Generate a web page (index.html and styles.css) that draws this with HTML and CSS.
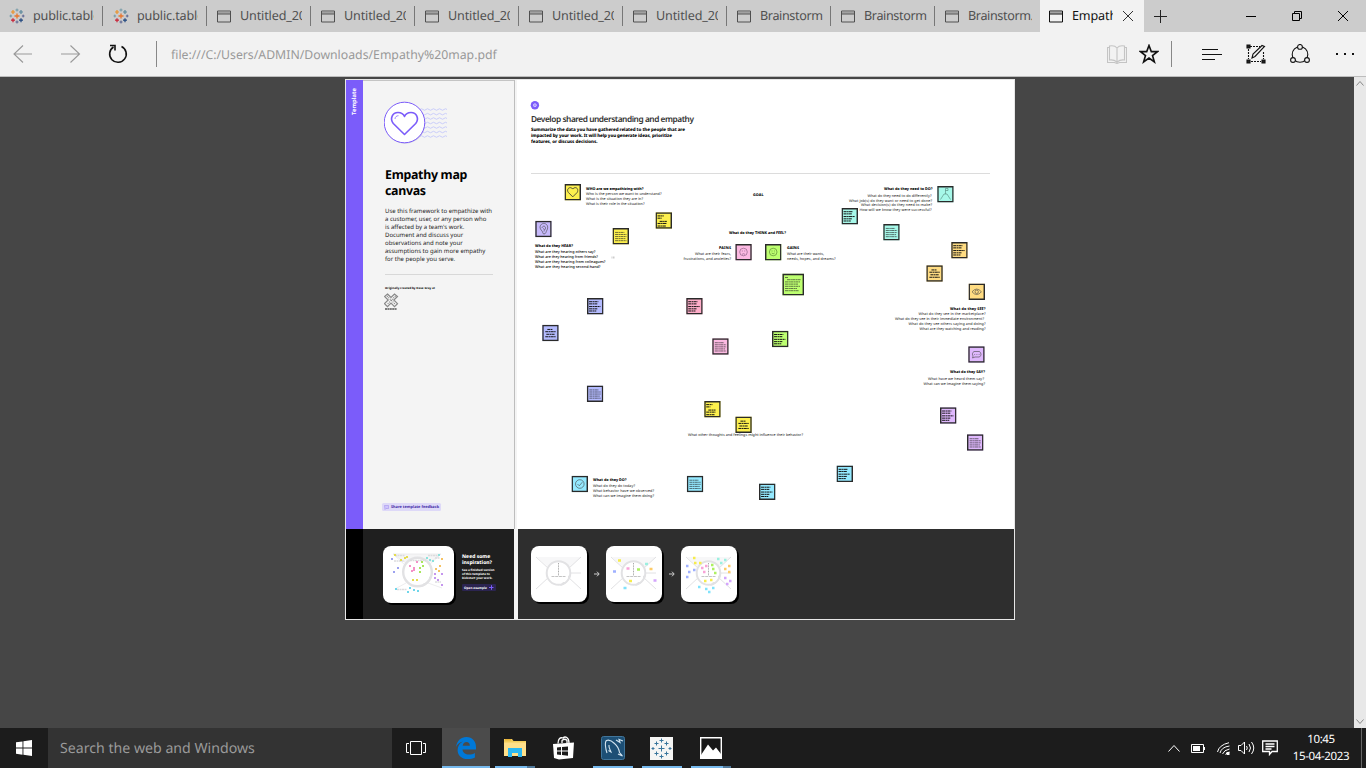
FILE: index.html
```html
<!DOCTYPE html>
<html lang="en">
<head>
<meta charset="utf-8">
<title>Empathy map.pdf</title>
<link rel="stylesheet" href="styles.css">
</head>
<body>
<svg class="defs" width="0" height="0">
  <defs>
    <symbol id="win" viewBox="0 0 14 13"><path d="M.5 1h13v11H.5zM.5 4h13" fill="none" stroke="currentColor"/><path d="M1 2h12v1.6H1z" fill="currentColor" opacity=".35"/></symbol>
    <symbol id="tableau" viewBox="-8 -8 16 16" fill="none">
      <path d="M-2.5 0h5M0-2.5v5" stroke="#e8762c" stroke-width="1.3"/>
      <path d="M-6-4h4M-4-6v4" stroke="#eb9129" stroke-width="1.2"/>
      <path d="M2-4h4M4-6v4" stroke="#59879b" stroke-width="1.2"/>
      <path d="M-6 4.2h4M-4 2.2v4" stroke="#c72035" stroke-width="1.2"/>
      <path d="M2 4.2h4M4 2.2v4" stroke="#1f457e" stroke-width="1.2"/>
      <path d="M-1.5-6h3M0-7.5v3M-7.5 0h2.6M-6.2-1.4v2.8" stroke="#7199a6"/>
      <path d="M-1.5 6h3M0 4.5v3M4.9 0h2.6M6.2-1.4v2.8" stroke="#5b6591"/>
    </symbol>
    <symbol id="heart" viewBox="0 0 28 26"><path d="M14 24 3.5 13.5C-1 8 2.5 1.5 8 1.500 11 1.500 13 3 14 5 15 3 17 1.500 20 1.500 25.500 1.500 29 8 24.500 13.500Z" fill="none" stroke="currentColor" stroke-width="2" stroke-linejoin="round"/></symbol>
    <symbol id="n1" viewBox="0 0 16 16"><path d="M0 0h16v16H0z" fill="currentColor"/><path class="ink" d="M2.500 4.300h9M2.500 6.300h11M2.500 8.300h11M2.500 10.300h10M2.500 12.300h11"/><path class="frame" d="M.7.7h14.600v14.600H.7z"/></symbol>
    <symbol id="n2" viewBox="0 0 16 16"><path d="M0 0h16v16H0z" fill="currentColor"/><path class="ink bold" d="M2 3.500h6M2 5.700h4M4 8.800h7M2 10.800h9M2 13.300h8"/><path class="frame" d="M.7.7h14.600v14.600H.7z"/></symbol>
    <symbol id="n3" viewBox="0 0 16 16"><path d="M0 0h16v16H0z" fill="currentColor"/><path class="ink bold" d="M5 4.500h5M3 6.700h10M4 9.200h8M3 11.600h10"/><path class="frame" d="M.7.7h14.600v14.600H.7z"/></symbol>
    <symbol id="n4" viewBox="0 0 16 16"><path d="M0 0h16v16H0z" fill="currentColor"/><path class="ink bold" d="M2 3.600h9M2 5.700h8M2 8.300h11M2 10.500h8M2 12.600h7"/><path class="frame" d="M.7.7h14.600v14.600H.7z"/></symbol>
    <symbol id="blank" viewBox="0 0 16 16"><path d="M0 0h16v16H0z" fill="currentColor"/><path class="frame" d="M.7.7h14.600v14.600H.7z"/></symbol>
    <symbol id="head" viewBox="0 0 56 56">
      <path d="M6 11h44L37 23H19z" fill="#f7f7f8"/>
      <path d="m5 11 13 12M50 11 37 23M5 43l13-12M50 43 37 31M40 27h10" stroke="#e2e2e4" fill="none"/>
      <circle cx="27.500" cy="27" r="11.800" fill="#fff" stroke="#e2e2e4" stroke-width="2"/>
      <path d="M35 17c4 3 5 8 4 12l-2 1v6h-5l-3 4c6-1 10-6 10.500-12C40 22 38 18 35 17z" fill="#e2e2e4"/>
      <path d="M27.500 17v13" stroke="#aaa" stroke-dasharray="1 .6"/><path d="M20.500 30.500h14" stroke="#c4c4c4" stroke-dasharray="3 .7"/>
    </symbol>
  </defs>
</svg>

<div class="screen">
  <header class="tabs">
    <div class="tab"><svg class="fav"><use href="#tableau"/></svg><span class="name">public.tableau</span></div>
    <div class="tab"><svg class="fav"><use href="#tableau"/></svg><span class="name">public.tableau</span></div>
    <div class="tab"><svg class="doc"><use href="#win"/></svg><span class="name">Untitled_2023</span></div>
    <div class="tab"><svg class="doc"><use href="#win"/></svg><span class="name">Untitled_2023</span></div>
    <div class="tab"><svg class="doc"><use href="#win"/></svg><span class="name">Untitled_2023</span></div>
    <div class="tab"><svg class="doc"><use href="#win"/></svg><span class="name">Untitled_2023</span></div>
    <div class="tab"><svg class="doc"><use href="#win"/></svg><span class="name">Untitled_2023</span></div>
    <div class="tab"><svg class="doc"><use href="#win"/></svg><span class="name tight">Brainstorm</span></div>
    <div class="tab"><svg class="doc"><use href="#win"/></svg><span class="name tight">Brainstorm</span></div>
    <div class="tab last"><svg class="doc"><use href="#win"/></svg><span class="name tight">Brainstorm.</span></div>
    <div class="tab active"><svg class="doc"><use href="#win"/></svg><span class="name">Empathy</span><svg class="close" viewBox="0 0 10 10"><path d="m0 0 10 10M10 0 0 10"/></svg></div>
    <svg class="plus" viewBox="0 0 13 13"><path d="M6.500 0v13M0 6.500h13"/></svg>
    <div class="winctl">
      <svg width="10" height="10"><path d="M0 5.500h10"/></svg>
      <svg width="10" height="10"><path d="M.5 2.500h7v7h-7zM2.500 2.500v-2h7v7h-2"/></svg>
      <svg width="10" height="10"><path d="m0 0 10 10M10 0 0 10"/></svg>
    </div>
  </header>

  <nav class="toolbar">
    <svg class="ico dim" width="20" height="18"><path d="M19 9H1M10 .5 1 9l9 8.500"/></svg>
    <svg class="ico dim" width="20" height="18"><path d="M0 9h18.500M9.500.5l9 8.500-9 8.500"/></svg>
    <svg class="ico refresh" width="20" height="20"><path d="M13.500 2.500A8.300 8.300 0 1 1 5.500 3M2 1.500h5v5" stroke-width="1.600"/></svg>
    <span class="bar"></span>
    <span class="url">file:///C:/Users/ADMIN/Downloads/Empathy%20map.pdf</span>
    <svg class="ico book" width="20" height="19"><path d="M2.500 2.500h-2v15h7l2.500 1 2.500-1h7v-15h-2M10 3v15M10 3C8 .5 5 .5 2.500 1v14c3-.5 5 0 7.500 2M10 3c2-2.500 5-2.500 7.500-2v14c-3-.5-5 0-7.500 2"/></svg>
    <svg class="ico" width="20" height="20"><path d="m10 1.500 2.300 6.100h6.200l-5 3.900 1.900 6.400-5.400-3.800-5.400 3.800 1.900-6.400-5-3.900h6.200z" stroke-width="1.600"/></svg>
    <span class="bar second"></span>
    <svg class="ico hub" width="20" height="12"><path d="M0 1.500h16M0 6.500h20M0 11.500h13" stroke-width="1.100"/></svg>
    <svg class="ico note" width="20" height="20"><path d="M4 2.500h10M2.500 5v10M5 17.500h10M17.500 8v7" stroke-dasharray="2 1"/><path d="M1 1h3v3H1zM1 16h3v3H1zM16 16h3v3h-3z" fill="#222"/><path d="m6 14 1-4L16 1.500l2.500 1L9 12.500z"/></svg>
    <svg class="ico share" width="20" height="20"><circle cx="10" cy="10.500" r="7.800"/><g fill="#f2f2f2"><circle cx="10" cy="2.900" r="2.400"/><circle cx="3" cy="16" r="2.400"/><circle cx="17" cy="16" r="2.400"/></g></svg>
    <svg class="ico more" width="18" height="4"><path d="M0 2h2M8 2h2M16 2h2" stroke-width="2"/></svg>
  </nav>

  <main class="viewer">
    <section class="board">
      <div class="spine"><span>Template</span></div>
      <div class="intro">
        <svg class="badge" width="66" height="44" viewBox="384 101 66 44">
          <g stroke="#c5c8fa" fill="none" stroke-width=".9"><path id="wv" d="M420 109.500q1.500-1.500 3 0t3 0 3 0 3 0 3 0 3 0 3 0 3 0 3 0"/><use href="#wv" y="4.600"/><use href="#wv" y="9"/><use href="#wv" y="13.500"/><use href="#wv" y="18"/><use href="#wv" y="22.500"/><use href="#wv" y="27"/></g>
          <circle cx="405" cy="123.400" r="20.200" fill="#ccc8dd"/><circle cx="404.500" cy="122.500" r="20.300" fill="#fff" stroke="#7b5cfa"/>
          <path d="M404.500 134.500 393.300 123.500C389.500 118.500 392.500 112.500 398 112.500 401 112.500 403.500 114 404.500 116.500 405.500 114 408 112.500 411 112.500 416.500 112.500 419.500 118.500 415.700 123.500Z" fill="none" stroke="#7b5cfa" stroke-width="1.600" stroke-linejoin="round"/><path d="M395 119c0-2 1.500-3.300 3.500-3.300" fill="none" stroke="#7b5cfa" stroke-width=".7"/>
        </svg>
        <h1>Empathy map<br>canvas</h1>
        <p class="lead">Use this framework to empathize with<br>a customer, user, or any person who<br>is affected by a team's work.<br>Document and discuss your<br>observations and note your<br>assumptions to gain more empathy<br>for the people you serve.</p>
        <p class="credit">Originally created by Dave Gray at</p>
        <svg class="xplane" width="15" height="18" viewBox="0 0 15 18"><g fill="none" stroke="#888" stroke-width="1.200"><path d="m3.500 1 3.500 3.500L10.500 1 13.500 3.500 9.800 7l3.700 3.700-3 3L7 10l-3.500 3.700-3-3L4.200 7 .5 3.500z"/><path d="m3 3 8.500 8.500M11.500 3 3 11.500" stroke-dasharray="1 1"/></g><path d="M1 16h12" stroke="#555" stroke-width="1.500" stroke-dasharray="2 .4"/></svg>
        <div class="feedback"><svg width="5" height="5"><path d="M.5.500h4v3H2l-1 1z" fill="#cfc6fb" stroke="#9b86ee" stroke-width=".5"/></svg><span>Share template feedback</span></div>
      </div>
      <svg class="canvas" viewBox="517 80 497 449" width="497" height="449">
        <circle cx="534.900" cy="105.200" r="4.200" fill="#7b5cfa"/><circle cx="534.900" cy="105.200" r="1.500" fill="#a995ff" stroke="#e1daff" stroke-width=".7"/>
        <text class="title" x="531" y="122.200" textLength="163">Develop shared understanding and empathy</text>
        <g class="summary"><text x="531" y="131.300" textLength="154">Summarize the data you have gathered related to the people that are</text><text x="531" y="137.300" textLength="141">impacted by your work. It will help you generate ideas, prioritize</text><text x="531" y="143.300" textLength="66.500">features, or discuss decisions.</text></g>
        <path d="M531 173.500h459" stroke="#dcdcdc"/>
        <g class="q">
          <text x="586" y="189.500" textLength="57.500">WHO are we empathizing with?</text>
          <text x="753" y="195.500" textLength="10.500">GOAL</text>
          <text x="729" y="234.300" textLength="57">What do they THINK and FEEL?</text>
          <text x="719" y="248.500" textLength="12">PAINS</text><text x="787" y="248.500" textLength="12">GAINS</text>
          <text x="535" y="247.400" textLength="38">What do they HEAR?</text>
          <text x="884" y="190.400" textLength="48.500">What do they need to DO?</text>
          <text x="950" y="309.500" textLength="35.500">What do they SEE?</text>
          <text x="950" y="373.400" textLength="35">What do they SAY?</text>
          <text x="593" y="481.300" textLength="33.500">What do they DO?</text>
        </g>
        <g class="a">
          <text x="586" y="195.400" textLength="75.500">Who is the person we want to understand?</text><text x="586" y="200.400" textLength="57">What is the situation they are in?</text><text x="586" y="205.300" textLength="58.500">What is their role in the situation?</text>
          <text x="695" y="255.200" textLength="36">What are their fears,</text><text x="683.500" y="260.200" textLength="47.500">frustrations, and anxieties?</text>
          <text x="787" y="255.200" textLength="37">What are their wants,</text><text x="787" y="260.200" textLength="48.500">needs, hopes, and dreams?</text>
          <g class="dark"><text x="535" y="253.300" textLength="60.500">What are they hearing others say?</text><text x="535" y="258.300" textLength="63">What are they hearing from friends?</text><text x="535" y="263.200" textLength="70.500">What are they hearing from colleagues?</text><text x="535" y="268.200" textLength="65.500">What are they hearing second-hand?</text></g>
          <text x="867.500" y="197.200" textLength="64">What do they need to do differently?</text><text x="849" y="202.200" textLength="83">What job(s) do they want or need to get done?</text><text x="861" y="206.300" textLength="71">What decision(s) do they need to make?</text><text x="859.500" y="211.300" textLength="72">How will we know they were successful?</text>
          <text x="918.500" y="315.200" textLength="67">What do they see in the marketplace?</text><text x="895" y="320.200" textLength="89">What do they see in their immediate environment?</text><text x="908.500" y="325.200" textLength="77">What do they see others saying and doing?</text><text x="919.500" y="330.300" textLength="66">What are they watching and reading?</text>
          <text x="928" y="380.200" textLength="56">What have we heard them say?</text><text x="923.500" y="385.300" textLength="61.500">What can we imagine them saying?</text>
          <text x="688" y="436.400" textLength="115">What other thoughts and feelings might influence their behavior?</text>
          <text x="593" y="487.200" textLength="42">What do they do today?</text><text x="593" y="492.200" textLength="61">What behavior have we observed?</text><text x="593" y="497.300" textLength="61">What can we imagine them doing?</text>
        </g>
        <g color="#fdf04d"><use href="#blank" x="564.500" y="184" width="16.500" height="16.500"/><use href="#n1" x="612.500" y="228" width="16.500" height="16.500"/><use href="#n2" x="655.500" y="212.300" width="16.500" height="16.500"/><use href="#n2" x="704.200" y="401" width="16.500" height="16.500"/><use href="#n3" x="735.300" y="416.500" width="16.500" height="16.500"/></g>
        <g color="#b4bbff"><use href="#n4" x="587" y="298" width="16.500" height="16.500"/><use href="#n3" x="542.200" y="324.800" width="16.500" height="16.500"/><use href="#n1" x="586.800" y="385.500" width="16.500" height="16.500"/></g>
        <g color="#c6b9fb"><use href="#blank" x="535.200" y="220.800" width="16.500" height="16.500"/></g>
        <g color="#fcb9e2"><use href="#blank" x="735.300" y="244" width="16.500" height="16.500"/><use href="#n1" x="712.200" y="338.300" width="16.500" height="16.500"/></g>
        <g color="#ffadc9"><use href="#n4" x="686.200" y="298" width="16.500" height="16.500"/></g>
        <g color="#bdff70"><use href="#blank" x="765" y="244" width="16.500" height="16.500"/><path d="M782.500 273.800H804v21.500h-21.500z" fill="currentColor"/><path class="frame" d="M783.200 274.500h20.100v20.100h-20.100z"/><path class="ink" d="M785 277.500h3M787 279.700h14M785 281.900h15M785 284.100h13M785 286.300h15M785 288.500h12M785 290.700h14"/><use href="#n4" x="772" y="330.800" width="16.500" height="16.500"/></g>
        <g color="#a6f8e9"><use href="#n4" x="841.500" y="208" width="16.500" height="16.500"/><use href="#n1" x="883.200" y="224" width="16.500" height="16.500"/><use href="#blank" x="937.200" y="186" width="16.500" height="16.500"/></g>
        <g color="#ffdc82"><use href="#n4" x="951.200" y="242" width="16.500" height="16.500"/><use href="#n3" x="926.300" y="265.300" width="16.500" height="16.500"/><use href="#blank" x="968.500" y="283.500" width="16.500" height="16.500"/></g>
        <g color="#dfb8fd"><use href="#blank" x="968.200" y="346.200" width="16.500" height="16.500"/><use href="#n4" x="940" y="407.300" width="16.500" height="16.500"/><use href="#n1" x="967" y="434.300" width="16.500" height="16.500"/></g>
        <g color="#94e9ff"><use href="#blank" x="571.500" y="475.800" width="16.500" height="16.500"/><use href="#n1" x="686.800" y="475.800" width="16.500" height="16.500"/><use href="#n4" x="759" y="483.500" width="16.500" height="16.500"/><use href="#n4" x="836.500" y="465.600" width="16.500" height="16.500"/></g>
        <use href="#heart" x="567" y="187" width="11.500" height="10.700" color="#333"/>
        <g fill="none" stroke="#444" stroke-width=".6">
          <path d="M540.500 229c-1.500-3 1-6 4-5.500 3 .5 4 4 2.500 6.500-1 1.500-1 4-3 4-1.500 0-1-2-2-3-.5-.7-1-1-1.500-2zM542 228c.5-2.500 3.500-2.500 3.500 0 0 1.500-1.500 2-1.500 3.500M543 228.500l1.500 1"/>
          <g stroke="#80547a"><circle cx="743.500" cy="252" r="3.800"/><path d="M742.300 250.500v1M744.700 250.500v1M742 254.300q1.500-1.200 3 0"/></g>
          <g stroke="#4f782b"><circle cx="773.200" cy="252" r="3.800"/><path d="M772 250.500v1M774.400 250.500v1M771.700 253q1.500 1.500 3 0"/></g>
          <path d="m940.500 199.500 3.500-5.500h3l3.500 5.500M945.500 194v-5.500h2.500v2h-2.500" stroke="#528579"/>
          <path d="M972 291.800q4.700-5.500 9.400 0-4.700 5.500-9.400 0z"/><circle cx="976.700" cy="291.800" r="1.700"/>
          <path d="M974 351.500h5.500q1.500 1.500 1.500 2.800t-1.500 2.700H975l-2.500 1 .6-2c-1-1.200-1-3.500.9-4.500zM974.300 354.500h.8M976.500 354.500h.8M978.700 354.500h.8"/>
          <circle cx="579.800" cy="484" r="4.300"/><path d="m577.500 484 1.800 1.800 3-3.600"/>
        </g>
        <path d="M611.500 257.500h3.500" stroke="#ccc" stroke-width="2" stroke-dasharray="1 .5"/>
      </svg>
      <div class="corner"></div>
      <div class="inspire">
        <svg class="card wide" viewBox="0 0 71 57" width="71" height="57">
          <path d="M10 8h48L43 19H26zM10 8l13 12M58 8 45 20M45 37l14 5M23 37l-11 6" fill="#f5f5f6" stroke="#e9e9eb" stroke-width=".8"/>
          <circle cx="34.500" cy="26" r="14.300" fill="#fff" stroke="#e2e2e4" stroke-width="2.400"/><path d="M44 16c4 4 5 9 4 14l-2 1v6h-5l-4 4c7-1 12-7 12.500-14C49 22 47 18 44 16z" fill="#e2e2e4"/>
          <g stroke="#dcdcde" stroke-width="1.500" stroke-dasharray="2 .5"><path d="M12 9.500h10M11 15h10M45 9.500h11M14 43.500h10M52 36h6M52 12h5M27 14.500h16"/></g>
          <g stroke-width="2.200"><path stroke="#e5dc50" d="M11 9h2M17 14h2M21 12h2M23 11h2M29 34h2M33 34h2"/><path stroke="#9ca1ef" d="M8 13h2M14 22h2M10 26h2"/><path stroke="#f491c7" d="M26 20h2M30 22h2M28 25h2M33 16h2M30 24h2"/><path stroke="#a8e65c" d="M36 22h2M39 20h2M36 26h2M38 16h2"/><path stroke="#8ce3dd" d="M43 12h2M46 14h2M55 9h2M49 15h2"/><path stroke="#f6c263" d="M56 20h2M52 23h2M55 25h2M58 13h2"/><path stroke="#c596ee" d="M51 28h2M58 28h2M51 32h2M54 34h2M58 39h2"/><path stroke="#70d6ea" d="M12 43h2M24 46h2M30 44h2M34 45h2M26 42h2"/></g>
        </svg>
        <div class="copy"><h2>Need some<br>inspiration?</h2><p>See a finished version<br>of this template to<br>kickstart your work.</p><div class="open"><span>Open example</span><svg width="5" height="5"><path d="M0 2.500h4.500M2.500.2v4.600" stroke="#7b5cfa" fill="none"/></svg></div></div>
      </div>
      <div class="steps">
        <svg class="card" viewBox="0 0 56 56" width="56" height="56"><use href="#head"/></svg>
        <svg class="arrow" width="6" height="6"><path d="M0 3h5M3 .7 5.200 3 3 5.300"/></svg>
        <svg class="card" viewBox="0 0 56 56" width="56" height="56"><use href="#head"/><g stroke-width="2.600"><path stroke="#f6ec4c" d="M12 14.500h3M23 35h3"/><path stroke="#9fb0ff" d="M7 25.500h3"/><path stroke="#f8a3d7" d="M20.500 22.500h3"/><path stroke="#adf061" d="M31 23.500h3"/><path stroke="#9cf0e0" d="M39 18h3"/><path stroke="#fdcb69" d="M43.500 23h3"/><path stroke="#d3a5fb" d="M47.500 34.500h3"/><path stroke="#82e2fb" d="M17.500 42h3"/></g></svg>
        <svg class="arrow" width="6" height="6"><path d="M0 3h5M3 .7 5.200 3 3 5.300"/></svg>
        <svg class="card" viewBox="0 0 56 56" width="56" height="56"><use href="#head"/><g stroke-width="2.400"><path stroke="#f6ec4c" d="M12 12h2.500M18 17h2.500M13 17h2.500M23 35h2.500M29 34h2.500"/><path stroke="#9fb0ff" d="M5 20h2.500M7 26h2.500M5 31h2.500M12 24h2.500"/><path stroke="#f8a3d7" d="M20 22h2.500M22 26h2.500M24 20h2.500"/><path stroke="#adf061" d="M31 23h2.500M33 27h2.500M30 19h2.500"/><path stroke="#9cf0e0" d="M36 13h2.500M39 17h2.500M43 14h2.500"/><path stroke="#fdcb69" d="M43 23h2.500M47 20h2.500M47 26h2.500"/><path stroke="#d3a5fb" d="M43 32h2.500M48 35h2.500M45 38h2.500"/><path stroke="#82e2fb" d="M17 41h2.500M24 43h2.500M31 42h2.500M27 46h2.500"/></g></svg>
      </div>
    </section>
    <aside class="scroll"><svg width="8" height="5"><path d="m.5 4.500 3.500-4 3.500 4"/></svg><svg width="8" height="5"><path d="m.5.500 3.500 4 3.500-4"/></svg></aside>
  </main>

  <footer class="taskbar">
    <div class="start"><svg width="16" height="16"><path d="M0 2.300 6.500 1.400v6.200H0zM7.400 1.200 16 0v7.600H7.400zM0 8.500h6.500v6.200L0 13.800zM7.400 8.500H16V16l-8.600-1.200z" fill="#fff"/></svg></div>
    <div class="search">Search the web and Windows</div>
    <div class="view"><svg width="20" height="14" fill="none" stroke="#fff"><path d="M4.500.500h11v13h-11zM3 2.500H.5v9H3M17 2.500h2.500v9H17"/></svg></div>
    <div class="app edge run"><svg width="20" height="22" viewBox="0 0 20 22"><path d="M0 10C1 3.500 5 0 10.400 0 16.500 0 20 4.500 20 10v2.500H6.500c.3 3.500 3 5 6.400 5 2.500 0 4.300-.6 6-1.600v4.500c-2 1-4.400 1.600-7.300 1.600C5.500 22 1.600 18.300 1.600 13.200c0-3.800 2-6.800 5.300-8.600C3.500 5 1.500 7.500 0 10zm6.700-1.300h7.100c0-2.500-1.200-3.700-3.300-3.700S7 6.500 6.700 8.700z" fill="#0078d7"/></svg></div>
    <div class="app run multi"><svg width="22" height="20"><path d="M0 1h8l1.500 2H22v15H0z" fill="#f3cd5c"/><path d="M0 4.500h22V18H0z" fill="#ffe08a"/><path d="M1 1.800h6" stroke="#e4a92c"/><path d="M4 19v-9h14v9h-4v-4H8v4z" fill="#2cb8f2"/></svg></div>
    <div class="app"><svg width="22" height="24"><path d="M0 8l21-1.500-1 15.500-14 1.500L1 22z" fill="#fff"/><path d="M5 7.500C5 3 7 1 10 2c2-2 6-1 6 5M9 7V4.500q3-2.500 5 0V7" fill="none" stroke="#fff" stroke-width="1.300"/><path d="M4 11.500 8 11v3.500H4zM9 11l6-.6v4.100H9zM4 15.500h4V19l-4-.4zM9 15.500h6v4.200L9 19z" fill="#1c1c1c"/></svg></div>
    <div class="app run"><svg width="24" height="24"><rect x=".5" y=".5" width="23" height="23" rx="2" fill="#1d4f75" stroke="#41759a"/><path d="M6 17C4.500 13 3.500 6 5.500 4.500 8 3.500 11 5 13.500 7.500c3 2.500 4.500 6 5 9l3 3.500-4.500-2M8 9c-.5 3 1 4 2 7l-2.500-1.500M15 4l4 2.500L18 3.500l4 1.500" fill="none" stroke="#d3e4ef" stroke-width="1.100"/></svg></div>
    <div class="app run tab-app"><svg width="23" height="23" viewBox="-11.500 -11.500 23 23"><path d="M-11.500-11.500h23v23h-23z" fill="#f5f5f4"/><path d="M-3 0h6M0-3v6M-7-5h4M-5-7v4M3-5h4M5-7v4M-7 5h4M-5 3v4M3 5h4M5 3v4M-2-8h4M0-10v4M-2 8h4M0 6v4M-10 0h3M7 0h3M-8.500-1.500v3M8.500-1.500v3" stroke="#38759c"/></svg></div>
    <div class="app run multi"><svg width="22" height="22"><path d="M.7.700h20.600v20.600H.7z" fill="#171717" stroke="#fff" stroke-width="1.400"/><path d="M1 18 8 7.500l5 6 3-3L21 17v4H1z" fill="#fff"/></svg></div>
    <div class="tray">
      <svg class="t1" width="12" height="7"><path d="m.5 6.500 5.500-6 5.500 6"/></svg>
      <svg class="t2" width="15" height="9"><path d="M.5.500h12v8H.5zM13.500 3v3"/><path d="M2 2h7v5H2z" fill="#fff" stroke="none"/></svg>
      <svg class="t3" width="13" height="13"><path d="M.5 10Q2 3 12 .7M3 11q1.500-6 9.500-7M5.500 12q1.500-4 7-5M8.500 12.500q1-2 4-2.500"/><path d="M9.500 10h3v3h-3z" fill="#fff" stroke="none"/></svg>
      <svg class="t4" width="17" height="14"><path d="M.5 4.500H3L6.500 1v12L3 9.500H.5zM8.500 5q1.500 2 0 4M11 3q3 4 0 8M13.500 1q4.500 6 0 12"/></svg>
      <svg class="t5" width="16" height="16"><path d="M.7 1h14.600v10.500H10l-2.500 3v-3H.7zM3.500 4h9M3.500 6.500h9M3.500 9h6" stroke-width="1.300"/></svg>
      <div class="clock"><span class="time">10:45</span><span>15-04-2023</span></div>
      <span class="peek"></span>
    </div>
  </footer>
</div>
</body>
</html>
```
FILE: styles.css
```css
* { box-sizing: border-box; }
body { margin: 0; font-family: "Noto Sans", sans-serif; text-rendering: geometricPrecision; }
svg { display: block; flex: none; }
h1, h2, p { margin: 0; }
.defs { position: absolute; }
.screen { width: 1366px; height: 768px; display: flex; flex-direction: column; overflow: hidden; }

.tabs { height: 32px; flex: none; display: flex; align-items: center; background: #ccc; }
.tab { width: 104px; height: 32px; display: flex; align-items: center; padding-left: 9px; color: #505050; background: linear-gradient(#777, #777) 102px 6px / 1px 20px no-repeat; }
.tab.last { background: none; }
.tab.active { background: #f2f2f2; color: #111; }
.fav { width: 16px; height: 16px; }
.doc { width: 14px; height: 13px; }
.name { width: 62px; margin-left: 9px; overflow: hidden; white-space: nowrap; font-size: 12.600px; letter-spacing: -.15px; line-height: 20px; }
.name.tight { width: 64px; letter-spacing: -.38px; }
.fav + .name { margin-left: 8px; width: 61px; }
.active .name { width: 41px; }
.close { width: 10px; height: 10px; margin-left: 10px; stroke: #333; }
.plus { width: 13px; height: 13px; margin-left: 10px; stroke: #222; }
.winctl { margin-left: auto; margin-right: 18px; display: flex; gap: 36px; fill: none; stroke: #000; }

.toolbar { height: 45px; flex: none; display: flex; align-items: center; padding: 0 12px 0 13px; background: #f2f2f2; border-bottom: 1px solid #bdbdbd; }
.ico { fill: none; stroke: #111; stroke-width: 1.100; }
.dim { stroke: #999; margin-right: 28px; }
.refresh { margin-left: -1px; }
.bar { width: 1px; height: 26px; background: #888; margin-left: 28px; }
.url { flex: 1; margin-left: 14px; color: #999; font-size: 12.270px; white-space: nowrap; }
.book { stroke: #c4c4c4; margin-right: 12px; }
.bar.second { margin-left: 12px; margin-right: 30px; }
.hub { margin-right: 24px; }
.note { margin-right: 24px; }
.share { margin-right: 26px; }

.viewer { height: 651px; flex: none; display: flex; background: #464646; padding-top: 2px; padding-left: 345px; }
.board { width: 670px; height: 541px; display: grid; grid-template-columns: 17px 151px 3px 497px; grid-template-rows: 449px 90px; background: #f4f4f4; border: 1px solid #e7e7e7; }
.spine { background: #7b5cfa; display: flex; justify-content: center; padding-top: 8px; }
.spine span { writing-mode: vertical-rl; transform: rotate(180deg); color: #fff; font-size: 5.800px; font-weight: 700; height: 27px; line-height: 17px; }
.intro { background: #f4f4f4; padding: 20px 21px 0; border-top: 1px solid #c4c4c4; box-shadow: 1px 0 0 #bdbdbd; display: flex; flex-direction: column; align-items: flex-start; }
.board > .canvas { grid-column: 4; background: #fff; }
.intro h1 { margin-top: 22px; margin-left: 1px; font-size: 12.400px; line-height: 16px; letter-spacing: -.3px; white-space: nowrap; }
.lead { margin: 8px 0 0 1px; width: 108px; height: 68px; font-size: 6px; line-height: 8px; color: #222; white-space: nowrap; border-bottom: 1px solid #d8d8d8; }
.credit { margin: 11px 0 0 1px; font-size: 2.950px; line-height: 5px; font-weight: 700; white-space: nowrap; }
.xplane { margin-top: 2px; }
.feedback { margin: 192px 0 0 -2px; width: 59px; height: 8px; display: flex; align-items: center; gap: 2px; padding-left: 2px; background: #ded9f8; border-radius: 1.500px; color: #432ba6; font-size: 3.850px; font-weight: 700; white-space: nowrap; }

.canvas text { fill: #222; }
.canvas .title { font-size: 8.300px; font-weight: 600; fill: #333; }
.summary text { font-size: 4.500px; font-weight: 800; fill: #000; }
.q text { font-size: 3.700px; font-weight: 800; fill: #000; }
.a text { font-size: 3.700px; fill: #111; }
.a .dark text { fill: #000; font-weight: 500; }
.ink { stroke: #222; stroke-width: .6; fill: none; stroke-dasharray: 3 .4 1.500 .3; }
.ink.bold { stroke-width: .95; stroke: #111; }
.frame { fill: none; stroke: #2a2a2a; stroke-width: 1.400; }

.corner { background: #000; grid-row: 2; grid-column: 1; }
.inspire { grid-row: 2; grid-column: 2; background: #1f1f1f; display: flex; padding: 17px 0 0 20px; gap: 8px; color: #fff; }
.card { background: #fff; border-radius: 8px; box-shadow: 2px 2px 0 #000; }
.copy { padding-top: 8px; white-space: nowrap; }
.copy h2 { font-size: 5px; line-height: 6px; font-weight: 800; }
.copy p { margin-top: 2px; font-size: 3px; line-height: 4px; font-weight: 700; }
.open { width: 34px; height: 7px; margin-top: 4px; padding: 0 2px; display: flex; align-items: center; justify-content: space-between; border-radius: 1px; background: #2b2450; font-size: 3.200px; font-weight: 700; }
.steps { grid-row: 2; grid-column: 4; margin-left: 1px; padding: 17px 0 0 13px; background: #2e2e2e; display: flex; align-items: flex-start; }
.arrow { margin: 25px 6px 0 7px; fill: none; stroke: #ccc; }
.scroll { width: 12px; height: 651px; margin: -2px 0 0 auto; padding: 4px 2px; background: #e8e8e8; display: flex; flex-direction: column; justify-content: space-between; fill: none; stroke: #888; }

.taskbar { height: 40px; flex: none; display: flex; background: #1c1c1c; color: #fff; }
.start { width: 48px; padding: 12px 16px; }
.search { width: 344px; padding-left: 12px; background: #333; color: #9a9a9a; font-size: 14.150px; line-height: 42px; white-space: nowrap; }
.view { width: 50px; padding: 13px 14px; }
.app { width: 48px; margin-right: 1px; height: 40px; display: flex; align-items: center; justify-content: center; }
.run { background: linear-gradient(#76b9ed, #76b9ed) 4px 38px / 40px 2px no-repeat; }
.run.edge { background: linear-gradient(#76b9ed, #76b9ed) 0 38px / 48px 2px no-repeat, #4b4b4b; }
.run.multi { background: linear-gradient(90deg, #76b9ed 32px, #50799b 32px) 4px 38px / 40px 2px no-repeat; }
.tab-app { padding-right: 1px; }
.tray { margin-left: auto; display: flex; align-items: center; fill: none; stroke: #fff; }
.tray svg { fill: none; stroke: #fff; }
.t1 { margin-right: 11px; }
.t2 { margin-right: 11px; }
.t3 { margin-right: 8px; }
.t4 { margin-right: 7px; }
.t5 { margin-right: 14px; }
.clock { width: 58px; display: flex; flex-direction: column; align-items: center; font-size: 11.500px; line-height: 17px; white-space: nowrap; letter-spacing: -.35px; }
.peek { width: 1px; height: 40px; margin: 0 4px 0 11px; background: #666; }
```
